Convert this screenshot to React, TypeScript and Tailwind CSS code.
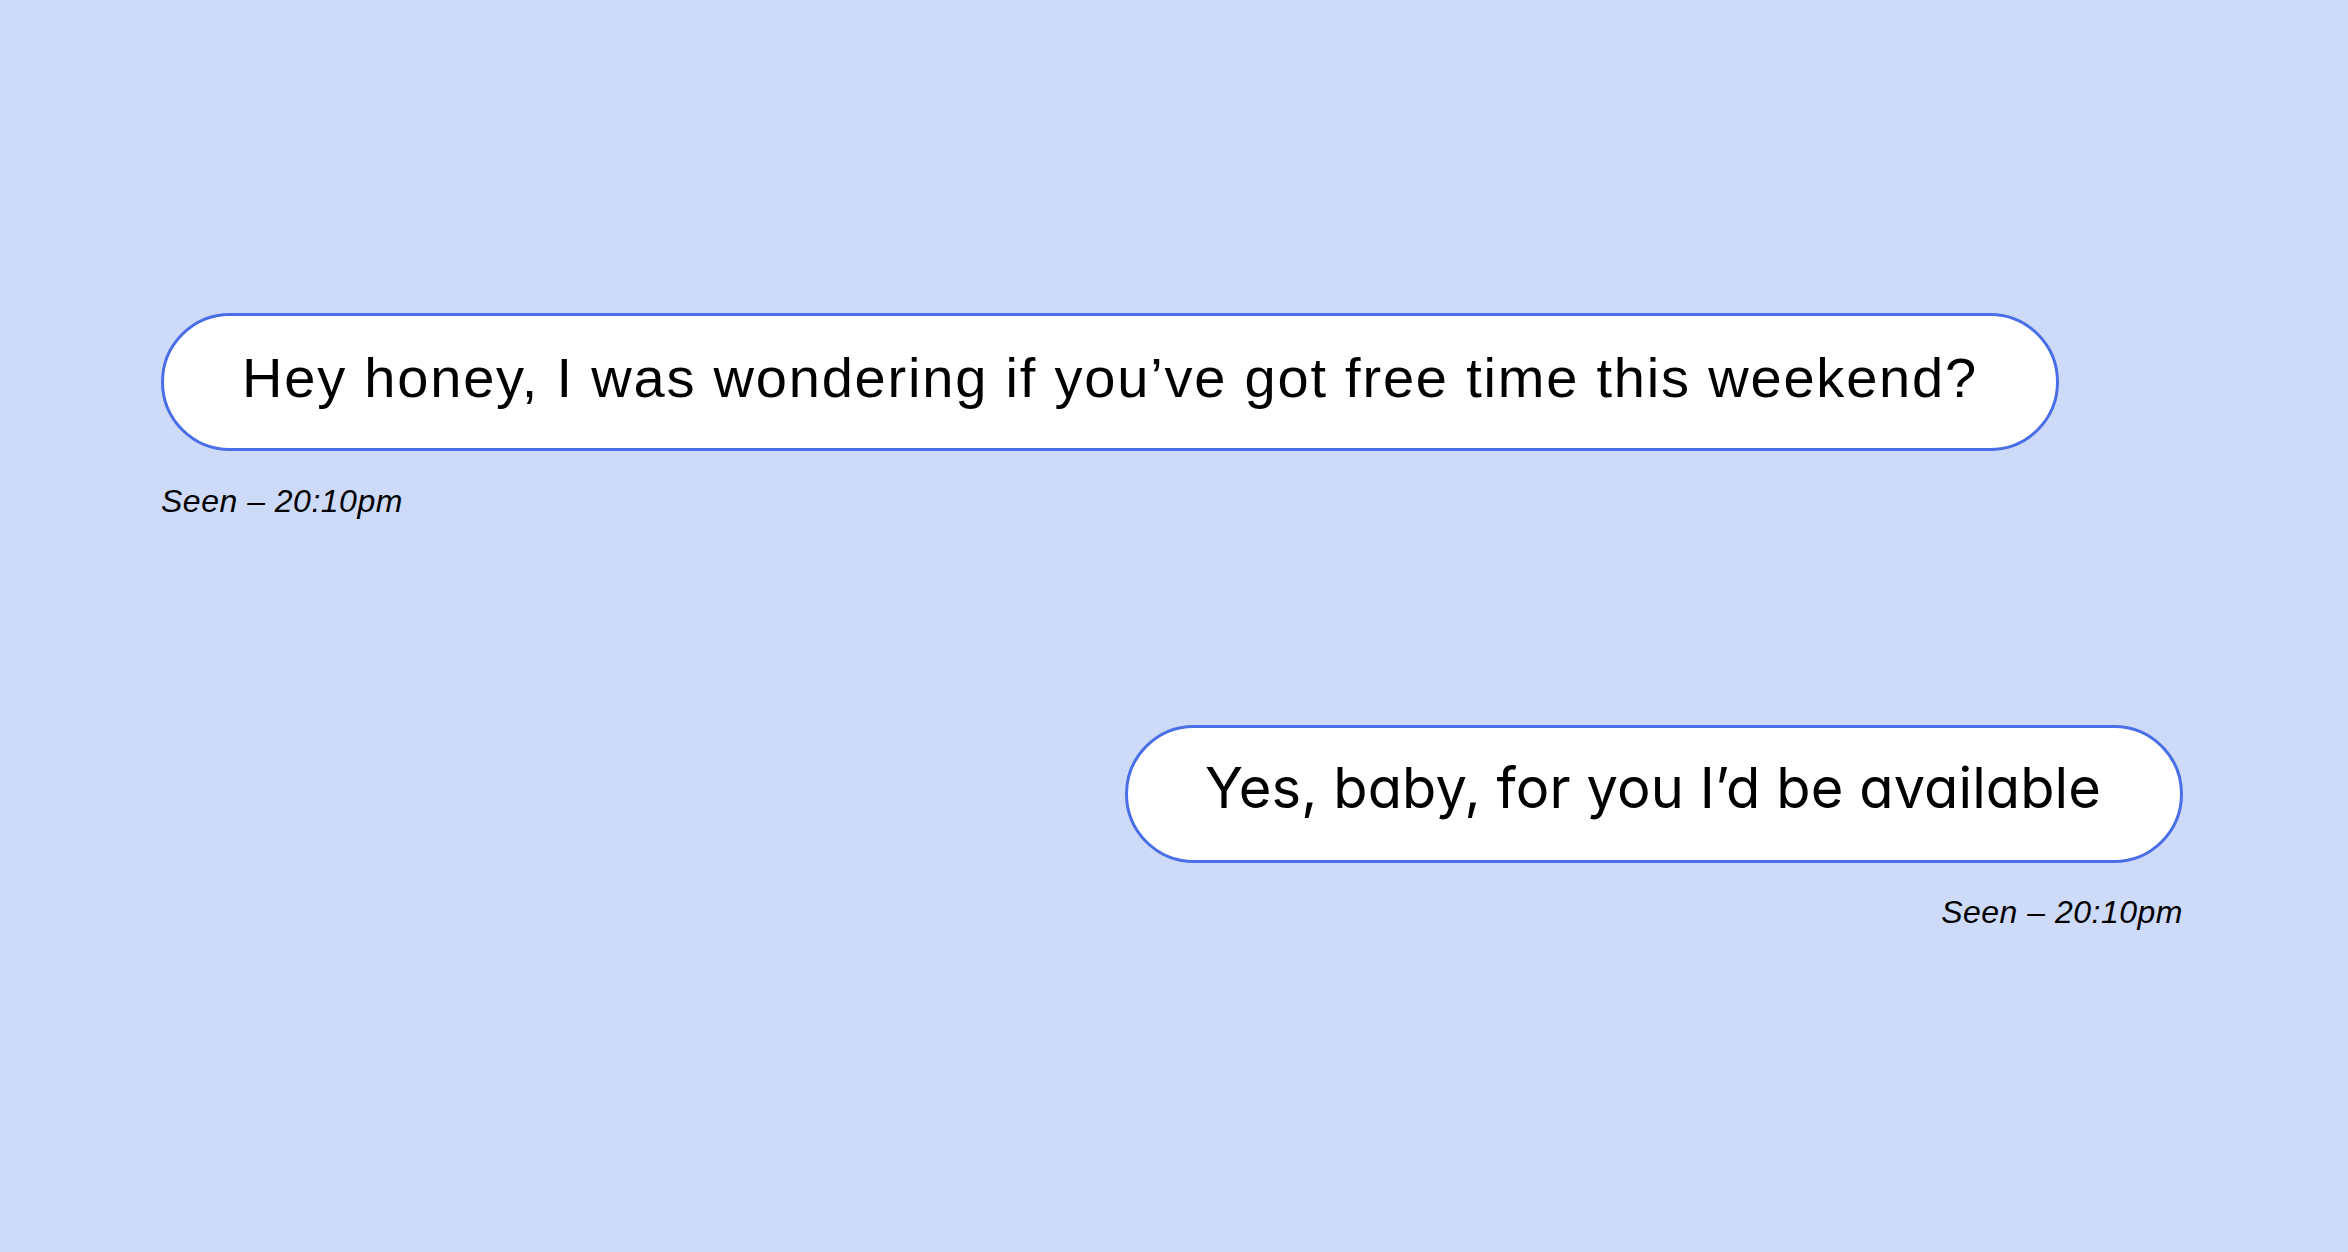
export default function App() {
  return (
    <div className="w-[2348px] h-[1252px] bg-[#cddaf8] overflow-hidden">
      <div className="flex flex-col pt-[313px] pl-[161px] pr-[165px]">
        <div className="flex flex-col items-start">
          <div className="w-[1898px] h-[138px] rounded-full border-[3.5px] border-[#4a6ee8] bg-white flex items-center pl-[78px] pb-[8px]">
            <span className="text-[56px] leading-none text-black tracking-[1.8px] whitespace-nowrap" style={{ fontFamily: '"Liberation Sans", Arial, sans-serif' }}>
              Hey honey, I was wondering if you’ve got free time this weekend?
            </span>
          </div>
          <div className="mt-[34px] text-[32px] leading-none italic text-black tracking-[0.5px] whitespace-nowrap" style={{ fontFamily: '"Liberation Sans", Arial, sans-serif' }}>
            Seen – 20:10pm
          </div>
        </div>
        <div className="flex flex-col items-end mt-[208px]">
          <div className="w-[1058px] h-[138px] rounded-full border-[3.5px] border-[#4a6ee8] bg-white flex items-center pl-[77px] pb-[12px]">
            <span className="text-[56px] leading-none text-black [font-feature-settings:'cv11'] tracking-[0.1px] whitespace-nowrap" style={{ fontFamily: 'Inter, sans-serif' }}>
              Yes, baby, for you I’d be available
            </span>
          </div>
          <div className="mt-[33px] text-[32px] leading-none italic text-black tracking-[0.5px] whitespace-nowrap" style={{ fontFamily: '"Liberation Sans", Arial, sans-serif' }}>
            Seen – 20:10pm
          </div>
        </div>
      </div>
    </div>
  );
}
